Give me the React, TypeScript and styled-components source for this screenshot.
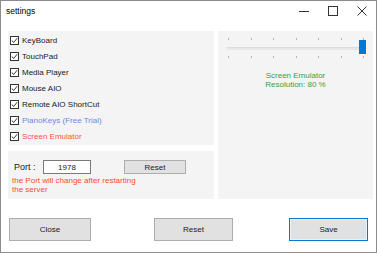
import styled, { createGlobalStyle } from "styled-components";

const Global = createGlobalStyle`
  html, body {
    margin: 0;
    padding: 0;
    background: #ffffff;
  }
  * {
    box-sizing: border-box;
  }
`;

const Window = styled.div`
  width: 377px;
  height: 253px;
  border: 1px solid #8c8c8c;
  background: #ffffff;
  display: flex;
  flex-direction: column;
  font-family: "Liberation Sans", Arial, sans-serif;
  font-size: 8px;
  color: #1a1a1a;
`;

const TitleBar = styled.div`
  height: 30px;
  display: flex;
  align-items: flex-start;
  padding: 5px 0 0 5px;
`;

const Title = styled.div`
  flex: 1;
  font-size: 8.5px;
  line-height: 10px;
  color: #000;
`;

const Caption = styled.div`
  display: flex;
`;

const CaptionButton = styled.div`
  width: 29px;
  height: 10px;
  display: flex;
  align-items: center;
  justify-content: center;
  svg {
    display: block;
  }
`;

const Content = styled.div`
  display: grid;
  grid-template-columns: 206px 155px;
  column-gap: 4px;
  padding: 0 3px 0 7px;
  height: 168px;
`;

const LeftColumn = styled.div`
  display: flex;
  flex-direction: column;
  gap: 6px;
`;

const Panel = styled.div`
  background: #f4f4f4;
`;

const CheckPanel = styled(Panel)`
  height: 114px;
  padding: 1px 0 0 2px;
`;

const CheckRow = styled.div<{ $color?: string }>`
  height: 16px;
  display: flex;
  align-items: center;
  gap: 3px;
  color: ${(p) => p.$color || "#1a1a1a"};
`;

const Box = styled.span`
  width: 9px;
  height: 9px;
  border: 1px solid #333;
  background: #fff;
  display: flex;
  align-items: center;
  justify-content: center;
`;

const PortPanel = styled(Panel)`
  flex: 1;
  padding: 9px 0 0 4px;
`;

const PortRow = styled.div`
  display: flex;
  align-items: center;
  height: 14px;
`;

const PortLabel = styled.span`
  width: 31px;
  padding-left: 2px;
  font-size: 9px;
`;

const PortInput = styled.div`
  width: 48px;
  height: 14px;
  border: 1px solid #7a7a7a;
  background: #fff;
  display: flex;
  align-items: center;
  justify-content: center;
  font-size: 8px;
`;

const SmallButton = styled.div`
  margin-left: 33px;
  width: 62px;
  height: 14px;
  border: 1px solid #adadad;
  background: #e1e1e1;
  display: flex;
  align-items: center;
  justify-content: center;
  font-size: 8px;
`;

const Warning = styled.div`
  margin-top: 2px;
  color: #ff4a2a;
  font-size: 8px;
  line-height: 9px;
  width: 140px;
`;

const RightPanel = styled(Panel)`
  padding: 7px 8px 0 8px;
`;

const Slider = styled.div`
  position: relative;
  height: 20px;
  display: flex;
  flex-direction: column;
  justify-content: space-between;
`;

const Ticks = styled.div`
  display: flex;
  justify-content: space-between;
  padding: 0 1px 0 2px;
  height: 2px;
`;

const Tick = styled.span`
  width: 1px;
  height: 2px;
  background: #b5b5b5;
`;

const Track = styled.div`
  height: 3px;
  margin: 0 1px;
  background: #e7e7e7;
  border-top: 1px solid #dcdcdc;
`;

const Thumb = styled.div`
  position: absolute;
  right: -1px;
  top: 2px;
  width: 7px;
  height: 14px;
  background: #0078d7;
`;

const Status = styled.div`
  margin-top: 13px;
  text-align: center;
  color: #3b9e3b;
  font-size: 8px;
  line-height: 9px;
`;

const Footer = styled.div`
  flex: 1;
  display: flex;
  align-items: flex-start;
  padding: 19px 0 0 8px;
`;

const Button = styled.div<{ $primary?: boolean; $width: number; $gap?: number }>`
  width: ${(p) => p.$width}px;
  margin-left: ${(p) => p.$gap || 0}px;
  height: 23px;
  background: #e1e1e1;
  border: 1px solid ${(p) => (p.$primary ? "#0078d7" : "#adadad")};
  box-shadow: ${(p) => (p.$primary ? "inset 0 0 0 1px #e8f2fb" : "none")};
  display: flex;
  align-items: center;
  justify-content: center;
  font-size: 8px;
  color: #1a1a1a;
`;

const Check = () => (
  <Box>
    <svg width="7" height="7" viewBox="0 0 7 7">
      <path d="M0.8 3.6 L2.7 5.4 L6.2 1.2" fill="none" stroke="#333" strokeWidth="1" />
    </svg>
  </Box>
);

const options: { label: string; color?: string }[] = [
  { label: "KeyBoard" },
  { label: "TouchPad" },
  { label: "Media Player" },
  { label: "Mouse AIO" },
  { label: "Remote AIO ShortCut" },
  { label: "PianoKeys (Free Trial)", color: "#6f84e6" },
  { label: "Screen Emulator", color: "#ff5533" },
];

export default function App() {
  const ticks = Array.from({ length: 7 });
  return (
    <>
      <Global />
      <Window>
        <TitleBar>
          <Title>settings</Title>
          <Caption>
            <CaptionButton>
              <svg width="10" height="10" viewBox="0 0 10 10">
                <path d="M0 5.5 H10" stroke="#333" strokeWidth="1" />
              </svg>
            </CaptionButton>
            <CaptionButton>
              <svg width="10" height="10" viewBox="0 0 10 10">
                <rect x="0.5" y="0.5" width="9" height="9" fill="none" stroke="#333" strokeWidth="1" />
              </svg>
            </CaptionButton>
            <CaptionButton>
              <svg width="10" height="10" viewBox="0 0 10 10">
                <path d="M0.5 0.5 L9.5 9.5 M9.5 0.5 L0.5 9.5" stroke="#333" strokeWidth="1" />
              </svg>
            </CaptionButton>
          </Caption>
        </TitleBar>
        <Content>
          <LeftColumn>
            <CheckPanel>
              {options.map((o) => (
                <CheckRow key={o.label} $color={o.color}>
                  <Check />
                  {o.label}
                </CheckRow>
              ))}
            </CheckPanel>
            <PortPanel>
              <PortRow>
                <PortLabel>Port :</PortLabel>
                <PortInput>1978</PortInput>
                <SmallButton>Reset</SmallButton>
              </PortRow>
              <Warning>
                the Port will change after restarting
                <br />
                the server
              </Warning>
            </PortPanel>
          </LeftColumn>
          <RightPanel>
            <Slider>
              <Ticks>
                {ticks.map((_, i) => (
                  <Tick key={i} />
                ))}
              </Ticks>
              <Track />
              <Ticks>
                {ticks.map((_, i) => (
                  <Tick key={i} />
                ))}
              </Ticks>
              <Thumb />
            </Slider>
            <Status>
              Screen Emulator
              <br />
              Resolution: 80 %
            </Status>
          </RightPanel>
        </Content>
        <Footer>
          <Button $width={82}>Close</Button>
          <Button $width={79} $gap={63}>Reset</Button>
          <Button $width={79} $gap={56} $primary>Save</Button>
        </Footer>
      </Window>
    </>
  );
}
